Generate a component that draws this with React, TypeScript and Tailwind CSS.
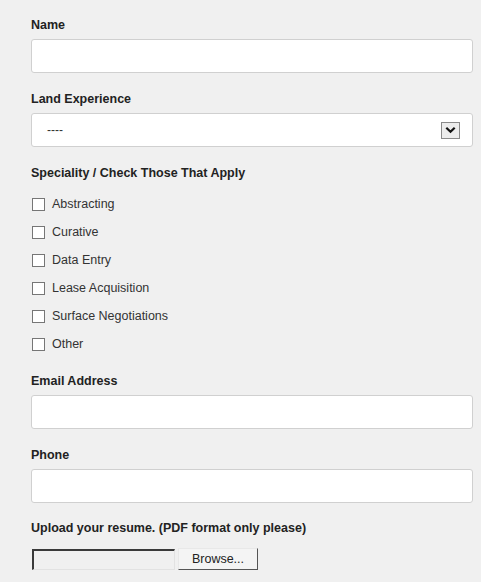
import React from "react";

const specialities = [
  "Abstracting",
  "Curative",
  "Data Entry",
  "Lease Acquisition",
  "Surface Negotiations",
  "Other",
];

function Label({ children }: { children: React.ReactNode }) {
  return (
    <div className="h-[14px] text-[12.5px] leading-[14px] font-bold text-[#222]">
      {children}
    </div>
  );
}

function TextField() {
  return (
    <div className="mt-[7px] h-[34px] w-full rounded-[3px] border border-[#d0d0d0] bg-white" />
  );
}

export default function App() {
  return (
    <div
      className="min-h-[582px] w-[481px] bg-[#f0f0f0] pl-[31px] pr-[8px] pt-[18px]"
      style={{ fontFamily: "Arial, 'Liberation Sans', sans-serif" }}
    >
      <Label>Name</Label>
      <TextField />

      <div className="mt-[19px]">
        <Label>Land Experience</Label>
        <div className="mt-[7px] flex h-[34px] w-full items-center justify-between rounded-[3px] border border-[#d0d0d0] bg-white pl-[15px] pr-[12px]">
          <span className="text-[12px] text-[#333]">----</span>
          <div className="flex h-[17px] w-[19px] items-center justify-center border border-[#8a8a8a] bg-[#ececec]">
            <svg width="11" height="8" viewBox="0 0 11 8">
              <path
                d="M1.3 1.8 L5.5 5.8 L9.7 1.8"
                fill="none"
                stroke="#111"
                strokeWidth="2.2"
              />
            </svg>
          </div>
        </div>
      </div>

      <div className="mt-[19px]">
        <Label>Speciality / Check Those That Apply</Label>
        <div className="mt-[10px] flex flex-col">
          {specialities.map((s) => (
            <div key={s} className="flex h-[28px] items-center pl-[1px]">
              <span className="h-[13px] w-[13px] border border-[#767676] bg-white" />
              <span className="ml-[7px] text-[12.5px] text-[#333]">{s}</span>
            </div>
          ))}
        </div>
      </div>

      <div className="mt-4">
        <Label>Email Address</Label>
        <TextField />
      </div>

      <div className="mt-[19px]">
        <Label>Phone</Label>
        <TextField />
      </div>

      <div className="mt-[18px]">
        <Label>Upload your resume. (PDF format only please)</Label>
        <div className="mt-[13px] flex items-center pl-[1px]">
          <div className="h-[21px] w-[143px] border-t-2 border-l-2 border-b border-r border-t-[#3a3a3a] border-l-[#3a3a3a] border-b-[#e2e2e2] border-r-[#e2e2e2] bg-[#f0f0f0]" />
          <div className="ml-[3px] flex h-[22px] w-[80px] items-center justify-center border border-t-[#e8e8e8] border-l-[#e8e8e8] border-b-[#555] border-r-[#555] bg-[#f4f4f4] text-[12.5px] text-[#222]">
            Browse...
          </div>
        </div>
      </div>
    </div>
  );
}
